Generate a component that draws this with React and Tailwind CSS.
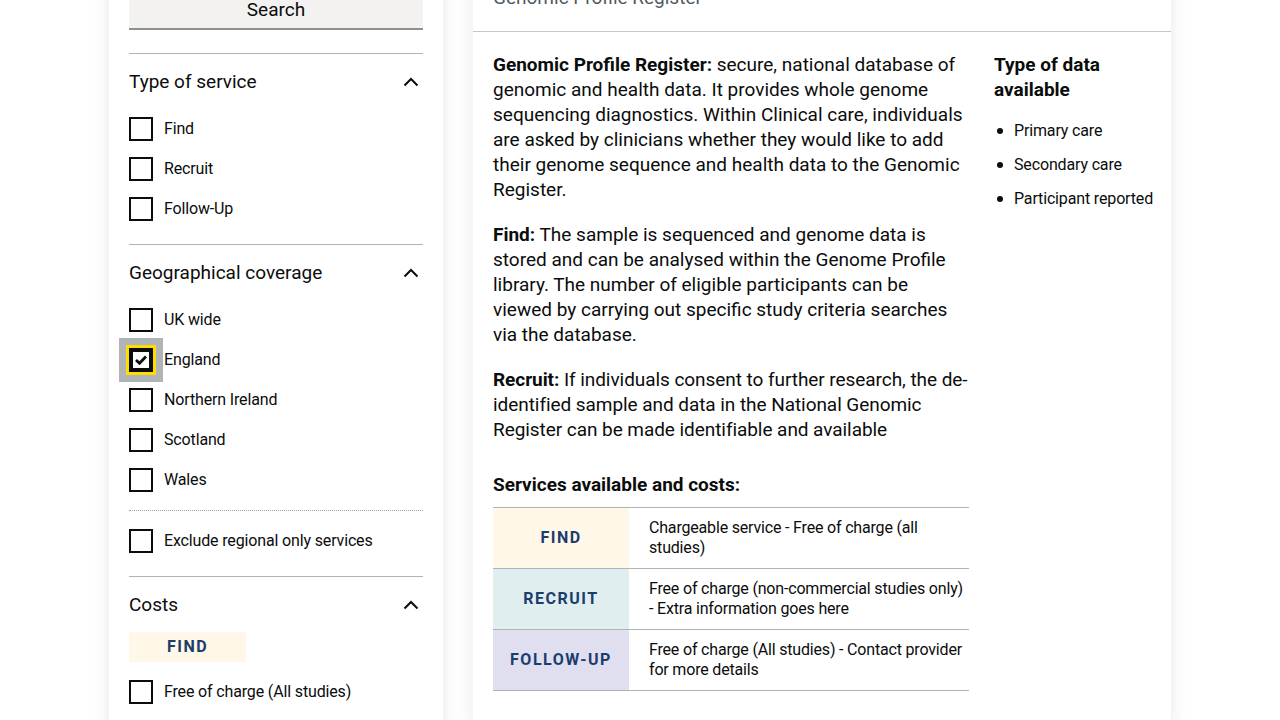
import React from "react";

function Chevron() {
  return (
    <svg width="16" height="10" viewBox="0 0 16 10" className="shrink-0">
      <path d="M1.5 8.5 L8 2 L14.5 8.5" fill="none" stroke="#0b0c0c" strokeWidth="2" />
    </svg>
  );
}

function Box({ label, checked }) {
  return (
    <label className="flex items-center h-[24px] gap-[11px]">
      {checked ? (
        <span className="relative w-[24px] h-[24px] shrink-0">
          <span className="absolute -left-[10px] -top-[10px] w-[44px] h-[44px] bg-[#b1b4b6]" />
          <span className="absolute -left-[3px] -top-[3px] w-[30px] h-[30px] bg-[#ffdd00]" />
          <span className="absolute left-0 top-0 w-[24px] h-[24px] border-[4px] border-[#0b0c0c] bg-white flex items-center justify-center">
            <svg width="12" height="10" viewBox="0 0 12 10">
              <path d="M1 5 L4.5 8.3 L11 1.5" fill="none" stroke="#0b0c0c" strokeWidth="2.8" />
            </svg>
          </span>
        </span>
      ) : (
        <span className="w-[24px] h-[24px] shrink-0 border-2 border-[#0b0c0c] bg-white" />
      )}
      <span className="text-[16px] leading-[20px] tracking-[-0.15px] text-[#0b0c0c]">{label}</span>
    </label>
  );
}

function Section({ title, children }) {
  return (
    <div className="border-t border-[#b1b4b6] pt-[15px]">
      <div className="flex items-center justify-between pr-[4px]">
        <h3 className="text-[19px] leading-[25px] text-[#0b0c0c]">{title}</h3>
        <Chevron />
      </div>
      {children}
    </div>
  );
}

const rows = [
  { k: "FIND", bg: "bg-[#fff7e8]", t: "Chargeable service - Free of charge (all studies)" },
  { k: "RECRUIT", bg: "bg-[#e0eeef]", t: "Free of charge (non-commercial studies only) - Extra information goes here" },
  { k: "FOLLOW-UP", bg: "bg-[#dfdff0]", t: "Free of charge (All studies) - Contact provider for more details" },
];

export default function App() {
  return (
    <div className="w-[1280px] h-[720px] overflow-hidden bg-white" style={{ fontFamily: "Roboto, 'Liberation Sans', sans-serif" }}>
      <div className="flex items-start gap-[30px] pl-[109px] -mt-[30px]">
        {/* Left filter card */}
        <aside className="w-[334px] bg-white shadow-[0_0_18px_rgba(0,0,0,0.09)] px-[20px] pt-[20px] pb-[40px] text-[#0b0c0c]">
          <button className="w-full h-[40px] bg-[#f3f2f1] border-b-2 border-[#929191] text-[19px] leading-[25px] text-[#0b0c0c] pt-[1px]">
            Search
          </button>
          <div className="mt-[23px]">
            <Section title="Type of service">
              <div className="mt-[23px] flex flex-col gap-[16px] pb-[23px]">
                <Box label="Find" />
                <Box label="Recruit" />
                <Box label="Follow-Up" />
              </div>
            </Section>
            <Section title="Geographical coverage">
              <div className="mt-[23px] flex flex-col gap-[16px] pb-[18px]">
                <Box label="UK wide" />
                <Box label="England" checked />
                <Box label="Northern Ireland" />
                <Box label="Scotland" />
                <Box label="Wales" />
              </div>
              <div className="border-t border-dotted border-[#a0a0a0] pt-[18px] pb-[23px]">
                <Box label="Exclude regional only services" />
              </div>
            </Section>
            <Section title="Costs">
              <div className="mt-[15px] w-[117px] h-[30px] bg-[#fff7e8] flex items-center justify-center text-[16px] font-bold tracking-[1.5px] text-[#1d3c6e]">
                FIND
              </div>
              <div className="mt-[18px]">
                <Box label="Free of charge (All studies)" />
              </div>
            </Section>
          </div>
        </aside>

        {/* Right detail card */}
        <main className="w-[698px] bg-white shadow-[0_0_18px_rgba(0,0,0,0.09)] text-[#0b0c0c]">
          <div className="px-[20px] pt-[15px] pb-[21px] border-b border-[#bfc7d0]">
            <h2 className="text-[19px] leading-[25px] text-[#505a5f]">Genomic Profile Register</h2>
          </div>
          <div className="px-[20px] pt-[20px] pb-[40px] flex gap-[25px]">
            <div className="w-[476px] shrink-0">
              <p className="text-[19px] leading-[25px] mb-[20px]">
                <b className="font-bold">Genomic Profile Register:</b> secure, national database of genomic and health data. It provides whole genome sequencing diagnostics. Within Clinical care, individuals are asked by clinicians whether they would like to add their genome sequence and health data to the Genomic Register.
              </p>
              <p className="text-[19px] leading-[25px] mb-[20px]">
                <b className="font-bold">Find:</b> The sample is sequenced and genome data is stored and can be analysed within the Genome Profile library. The number of eligible participants can be viewed by carrying out specific study criteria searches via the database.
              </p>
              <p className="text-[19px] leading-[25px] tracking-[-0.06px]">
                <b className="font-bold">Recruit:</b> If individuals consent to further research, the de-identified sample and data in the National Genomic Register can be made identifiable and available
              </p>
              <h3 className="mt-[30px] text-[19px] leading-[25px] font-bold">Services available and costs:</h3>
              <div className="mt-[10px] border-b border-[#b1b4b6]">
                {rows.map((r) => (
                  <div key={r.k} className="flex border-t border-[#b1b4b6] h-[61px]">
                    <div className={`w-[136px] shrink-0 ${r.bg} flex items-center justify-center text-[16px] font-bold tracking-[1.5px] text-[#1d3c6e]`}>
                      {r.k}
                    </div>
                    <div className="flex-1 pl-[20px] flex items-center text-[16px] leading-[20px] tracking-[-0.18px]">
                      {r.t}
                    </div>
                  </div>
                ))}
              </div>
            </div>
            <div className="flex-1">
              <h3 className="text-[19px] leading-[25px] font-bold">Type of data available</h3>
              <ul className="mt-[17px] flex flex-col gap-[10px] text-[16px] leading-[24px] tracking-[-0.15px]">
                {["Primary care", "Secondary care", "Participant reported"].map((x) => (
                  <li key={x} className="flex items-center whitespace-nowrap">
                    <span className="w-[6px] h-[6px] rounded-full bg-[#0b0c0c] ml-[3px] mr-[11px] shrink-0" />
                    {x}
                  </li>
                ))}
              </ul>
            </div>
          </div>
        </main>
      </div>
    </div>
  );
}
